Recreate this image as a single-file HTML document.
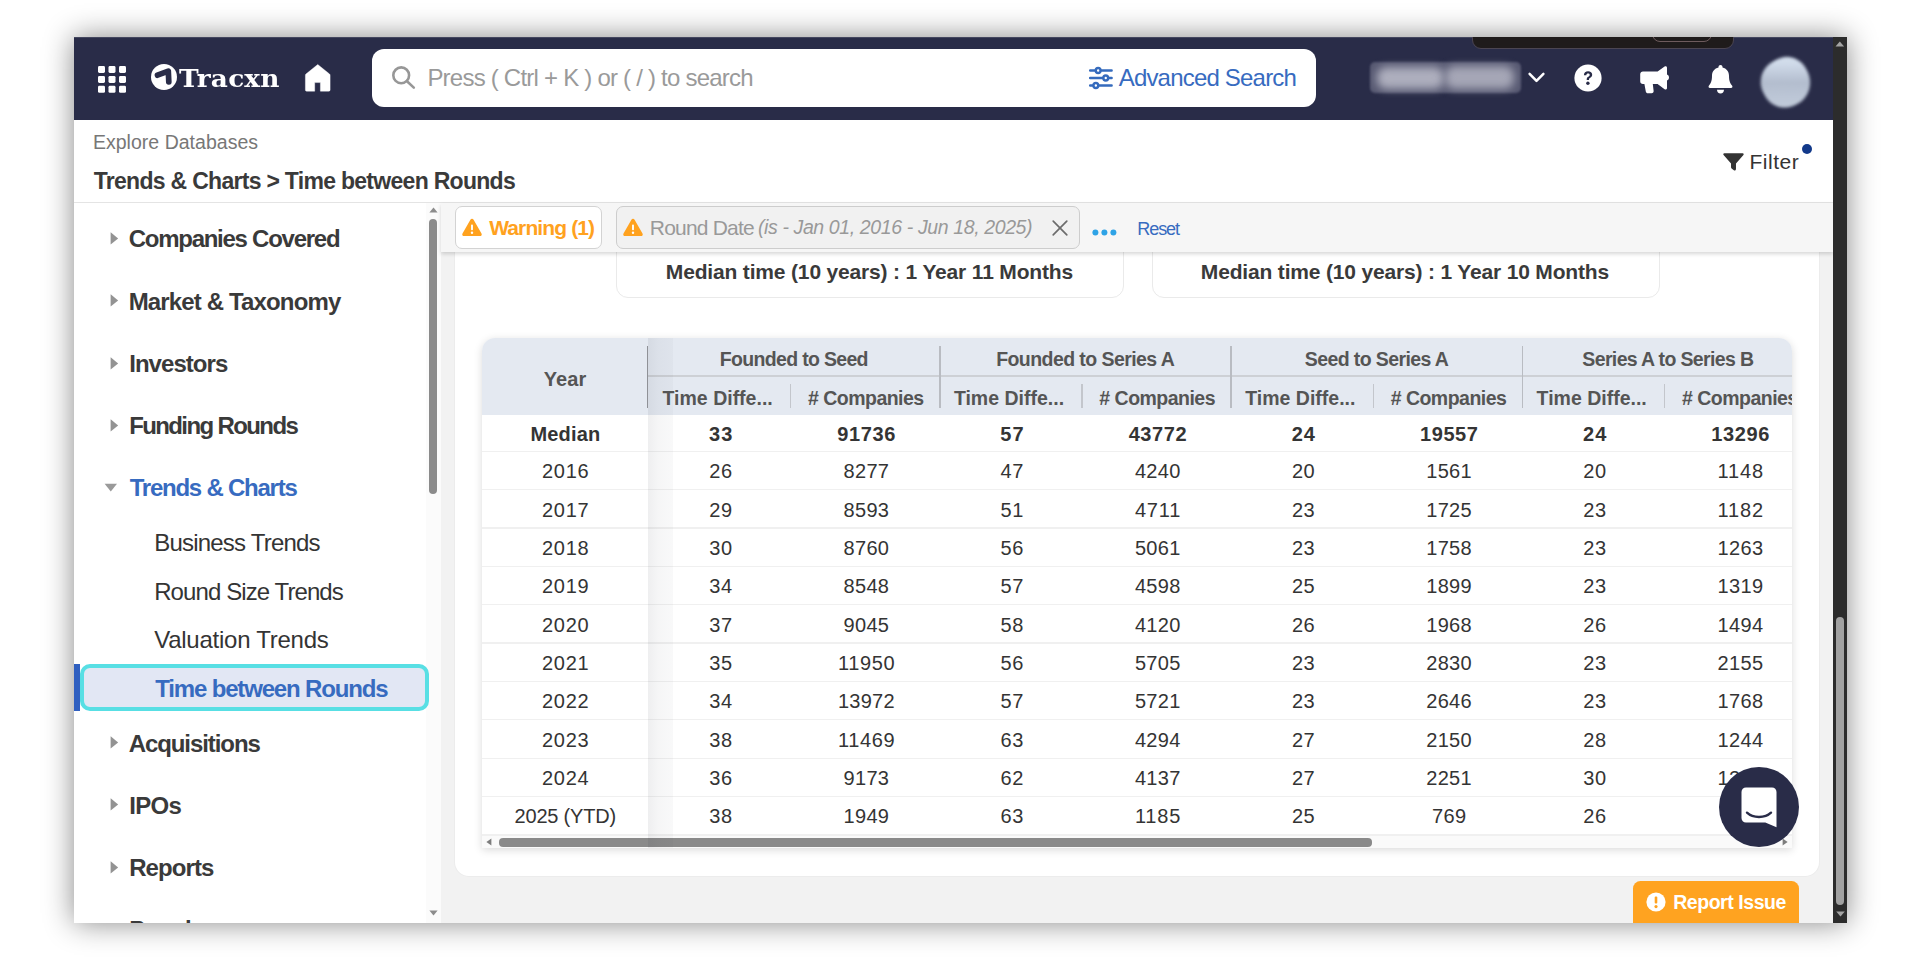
<!DOCTYPE html>
<html lang="en"><head><meta charset="utf-8"><title>Tracxn - Time between Rounds</title>
<style>
html,body{margin:0;padding:0;background:#fff;}
body{width:1920px;height:960px;overflow:hidden;position:relative;font-family:"Liberation Sans",sans-serif;}
.win{position:absolute;left:74px;top:37px;width:1773px;height:886px;overflow:hidden;background:#f3f3f3;}
.shadow{position:absolute;left:74px;top:37px;width:1773px;height:886px;box-shadow:0 0 28px rgba(0,0,0,.47);}
.o{position:absolute;left:-74px;top:-37px;width:1920px;height:960px;}
.a{position:absolute;}
.t{position:absolute;white-space:nowrap;line-height:1;z-index:2;}
svg{position:absolute;overflow:visible;}
</style></head><body>
<div class="shadow"></div>
<div class="win"><div class="o">

<!-- top bar -->
<div class="a" style="left:74px;top:37px;width:1759px;height:83px;background:#292c48;"></div>
<div class="a" style="left:74px;top:37px;width:1759px;height:1px;background:rgba(255,255,255,.13);"></div>
<!-- black pill overlay at top -->
<div class="a" style="left:1472.3px;top:20px;width:261.4px;height:29px;box-sizing:border-box;background:#1f1b1b;border:1px solid #4b4552;border-radius:9px;"></div>
<div class="a" style="left:1652.3px;top:20px;width:57.6px;height:20.4px;border:1.4px solid #6e5b5d;border-radius:8px;"></div>
<!-- app grid icon -->
<svg style="left:98px;top:65.8px" width="28" height="27" viewBox="0 0 28 27" fill="#fff">
<rect x="0" y="0" width="7" height="7" rx="1.4"/><rect x="10.5" y="0" width="7" height="7" rx="1.4"/><rect x="21" y="0" width="7" height="7" rx="1.4"/>
<rect x="0" y="9.9" width="7" height="7" rx="1.4"/><rect x="10.5" y="9.9" width="7" height="7" rx="1.4"/><rect x="21" y="9.9" width="7" height="7" rx="1.4"/>
<rect x="0" y="19.8" width="7" height="7" rx="1.4"/><rect x="10.5" y="19.8" width="7" height="7" rx="1.4"/><rect x="21" y="19.8" width="7" height="7" rx="1.4"/>
</svg>
<!-- logo mark -->
<svg style="left:151px;top:64.1px" width="26" height="26" viewBox="0 0 26 26">
<circle cx="13" cy="13" r="13" fill="#fff"/>
<path d="M6.5 11.2 L17.3 7.1 L17.8 17.9" fill="none" stroke="#292c48" stroke-width="5.7" stroke-linecap="round" stroke-linejoin="round"/>
</svg>
<!-- home icon -->
<svg style="left:304.8px;top:63.8px" width="25.5" height="27.4" viewBox="0 0 26 27.4" preserveAspectRatio="none">
<path d="M13 0.5 L25 10 Q25.6 10.5 25.6 11.3 V25.9 Q25.6 27.2 24.2 27.2 H15.7 V18.6 H9.9 V27.2 H1.8 Q0.4 27.2 0.4 25.9 V11.3 Q0.4 10.5 1 10 Z" fill="#fff" stroke="#fff" stroke-width="0.4" stroke-linejoin="round"/>
</svg>
<!-- search box -->
<div class="a" style="left:371.5px;top:49.2px;width:944.5px;height:57.7px;background:#fff;border-radius:12px;"></div>
<svg style="left:391.5px;top:66.2px" width="23" height="23" viewBox="0 0 23 23" fill="none" stroke="#979797" stroke-width="2.6" stroke-linecap="round">
<circle cx="9.2" cy="9.3" r="7.9"/><path d="M15 15.2 L21.8 21.6"/>
</svg>
<!-- sliders icon -->
<svg style="left:1088.8px;top:67px" width="23.8" height="22" viewBox="0 0 25 22" preserveAspectRatio="none" fill="none" stroke="#356bbd" stroke-width="2.5" stroke-linecap="round">
<path d="M1.2 3.6 H23.8 M1.2 11 H23.8 M1.2 18.4 H23.8"/>
<circle cx="9.6" cy="3.6" r="2.5" fill="#fff"/><circle cx="17.6" cy="11" r="2.5" fill="#fff"/><circle cx="7.2" cy="18.4" r="2.5" fill="#fff"/>
</svg>
<!-- blurred account name -->
<div class="a" style="left:1369.5px;top:62px;width:151.5px;height:31px;border-radius:5px;background:#575972;filter:blur(1.3px);"></div>
<div class="a" style="left:1377px;top:66.5px;width:67px;height:22px;border-radius:9px;background:#adaebd;filter:blur(4.2px);"></div>
<div class="a" style="left:1445px;top:65.5px;width:69px;height:23px;border-radius:9px;background:#a5a6b6;filter:blur(4.2px);"></div>
<!-- chevron -->
<svg style="left:1527.6px;top:71.8px" width="17" height="11" viewBox="0 0 17 11" fill="none" stroke="#fff" stroke-width="2.5" stroke-linecap="round" stroke-linejoin="round"><path d="M1.6 1.8 L8.5 8.8 L15.4 1.8"/></svg>
<!-- help -->
<svg style="left:1573.9px;top:63.8px" width="28" height="28" viewBox="0 0 28 28">
<circle cx="14" cy="14" r="13.6" fill="#fff"/>
<path d="M9.9 11.2 C9.9 8.6 11.7 7.3 14.1 7.3 C16.5 7.3 18.2 8.6 18.2 10.7 C18.2 12.6 17 13.3 15.9 14 C15.2 14.5 15 14.9 15 15.9 H12.7 C12.7 14.2 13 13.5 14.2 12.7 C15.1 12.1 15.7 11.7 15.7 10.9 C15.7 10 15 9.5 14.1 9.5 C13 9.5 12.4 10.1 12.3 11.2 Z" fill="#292c48"/>
<circle cx="13.9" cy="19.2" r="1.7" fill="#292c48"/>
</svg>
<!-- megaphone -->
<svg style="left:1639.6px;top:65.6px" width="30" height="28" viewBox="0 0 30 28" fill="#fff">
<path d="M24.6 0.6 C25.8 -0.2 27 0.5 27 1.8 V8.6 C28.2 9 29 10.1 29 11.6 C29 13.1 28.2 14.2 27 14.6 V22 C27 23.3 25.8 24 24.6 23.2 L17.6 18 H12.8 L13.6 24.8 C13.8 26.2 13 27.2 11.6 27.2 H8 C6.8 27.2 6 26.5 5.8 25.4 L4.4 18 H3 C1.3 18 0.2 16.9 0.2 15.2 V8.2 C0.2 6.5 1.3 5.4 3 5.4 H17.6 Z"/>
</svg>
<!-- bell -->
<svg style="left:1707.8px;top:64.6px" width="25" height="29" viewBox="0 0 25 29" fill="#fff">
<path d="M12.5 0 C13.7 0 14.5 0.8 14.5 1.9 V2.6 C18.5 3.5 21 6.8 21 10.8 C21 16.4 22.4 18.8 24 20.4 C24.9 21.3 24.4 23 23 23 H2 C0.6 23 0.1 21.3 1 20.4 C2.6 18.8 4 16.4 4 10.8 C4 6.8 6.5 3.5 10.5 2.6 V1.9 C10.5 0.8 11.3 0 12.5 0 Z"/>
<path d="M9 24.8 H16 C16 27 14.6 28.6 12.5 28.6 C10.4 28.6 9 27 9 24.8 Z"/>
</svg>
<!-- avatar (blurred) -->
<div class="a" style="left:1760.5px;top:57.5px;width:49px;height:48.5px;border-radius:48% 44% 50% 46%;transform:rotate(-28deg);background:linear-gradient(208deg,#d9e4f1 0%,#cfdae9 22%,#b3bdce 50%,#bcc6d6 72%,#c6cfdc 100%);filter:blur(1.7px);"></div>
<!-- sub header -->
<div class="a" style="left:74px;top:120px;width:1759px;height:82px;background:#fff;border-bottom:1px solid #e4e4e4;"></div>
<svg style="left:1722.5px;top:152.5px" width="21" height="18" viewBox="0 0 22 18" preserveAspectRatio="none"><path d="M1.4 0.3 H20.6 C21.6 0.3 22 1.3 21.4 2 L13.6 10.6 V16 C13.6 17.3 12.4 17.9 11.4 17.2 L9 15.4 C8.5 15 8.4 14.6 8.4 14 V10.6 L0.6 2 C0 1.3 0.4 0.3 1.4 0.3 Z" fill="#333"/></svg>
<div class="a" style="left:1801.5px;top:143.6px;width:10.4px;height:10.4px;border-radius:50%;background:#12398a;"></div>
<!-- sidebar -->
<div class="a" style="left:74px;top:203px;width:352px;height:720px;background:#fff;"></div>
<div class="a" style="left:426px;top:203px;width:14.5px;height:720px;background:#fbfbfb;"></div>
<svg style="left:428.8px;top:206.9px" width="9" height="6" viewBox="0 0 9 6"><path d="M4.5 0.6 L8.6 5.4 H0.4 Z" fill="#8c8c8c"/></svg>
<div class="a" style="left:429px;top:218.6px;width:8.2px;height:275.6px;border-radius:4px;background:#8b8b8b;"></div>
<svg style="left:429px;top:909.5px" width="9" height="6" viewBox="0 0 9 6"><path d="M4.5 5.4 L8.6 0.6 H0.4 Z" fill="#8c8c8c"/></svg>
<!-- selected item -->
<div class="a" style="left:74px;top:664.3px;width:6px;height:47px;background:#2f5fc0;"></div>
<div class="a" style="left:80px;top:664.3px;width:348.5px;height:47px;box-sizing:border-box;border:4.6px solid #58dfe4;border-radius:10px;background:#e2e7f4;"></div>
<svg style="left:109.8px;top:231.9px" width="8.8" height="12.8" viewBox="0 0 9 14"><path d="M0.4 0.4 L8.6 7 L0.4 13.6 Z" fill="#939393"/></svg>
<svg style="left:109.8px;top:294.2px" width="8.8" height="12.8" viewBox="0 0 9 14"><path d="M0.4 0.4 L8.6 7 L0.4 13.6 Z" fill="#939393"/></svg>
<svg style="left:109.8px;top:356.7px" width="8.8" height="12.8" viewBox="0 0 9 14"><path d="M0.4 0.4 L8.6 7 L0.4 13.6 Z" fill="#939393"/></svg>
<svg style="left:109.8px;top:418.8px" width="8.8" height="12.8" viewBox="0 0 9 14"><path d="M0.4 0.4 L8.6 7 L0.4 13.6 Z" fill="#939393"/></svg>
<svg style="left:109.8px;top:736.1px" width="8.8" height="12.8" viewBox="0 0 9 14"><path d="M0.4 0.4 L8.6 7 L0.4 13.6 Z" fill="#939393"/></svg>
<svg style="left:109.8px;top:798.4px" width="8.8" height="12.8" viewBox="0 0 9 14"><path d="M0.4 0.4 L8.6 7 L0.4 13.6 Z" fill="#939393"/></svg>
<svg style="left:109.8px;top:860.7px" width="8.8" height="12.8" viewBox="0 0 9 14"><path d="M0.4 0.4 L8.6 7 L0.4 13.6 Z" fill="#939393"/></svg>
<svg style="left:109.8px;top:922.9px" width="8.8" height="12.8" viewBox="0 0 9 14"><path d="M0.4 0.4 L8.6 7 L0.4 13.6 Z" fill="#939393"/></svg>
<svg style="left:103.7px;top:483.2px" width="14" height="9" viewBox="0 0 14 9"><path d="M0.6 0.8 H13 L6.8 8.4 Z" fill="#9a9a9a"/></svg>
<!-- main -->
<div class="a" style="left:440.5px;top:203px;width:1392.5px;height:720px;background:#f2f2f2;"></div>
<!-- white card -->
<div class="a" style="left:455px;top:230px;width:1364.3px;height:645.7px;background:#fff;border-radius:0 0 14px 14px;box-shadow:0 0 0 1px #ececec;"></div>
<!-- median cards -->
<div class="a" style="left:616px;top:230px;width:507.5px;height:67.8px;box-sizing:border-box;border:1.3px solid #eaeaea;border-radius:0 0 12px 12px;background:#fff;"></div>
<div class="a" style="left:1151.5px;top:230px;width:508px;height:67.8px;box-sizing:border-box;border:1.3px solid #eaeaea;border-radius:0 0 12px 12px;background:#fff;"></div>
<!-- filter bar -->
<div class="a" style="left:441.3px;top:203px;width:1391.7px;height:49px;background:#f6f6f6;box-shadow:0 2px 4px rgba(0,0,0,.16);"></div>
<div class="a" style="left:455px;top:206px;width:146.5px;height:42.7px;box-sizing:border-box;border:1.3px solid #d3d3d3;border-radius:7px;background:#fff;"></div>
<div class="a" style="left:616px;top:206px;width:464px;height:42.7px;box-sizing:border-box;border:1.3px solid #cdcdcd;border-radius:7px;background:#f1f1f1;"></div>
<svg style="left:462.3px;top:218px" width="20" height="18" viewBox="0 0 20 18"><path d="M10 0.8 C10.7 0.8 11.2 1.1 11.6 1.8 L19.5 15.4 C20.2 16.7 19.5 18 18 18 H2 C0.5 18 -0.2 16.7 0.5 15.4 L8.4 1.8 C8.8 1.1 9.3 0.8 10 0.8 Z" fill="#ffa21f"/><rect x="9.05" y="6.4" width="1.9" height="5.8" rx="0.8" fill="#fff"/><circle cx="10" cy="14.8" r="1.2" fill="#fff"/></svg>
<svg style="left:623.3px;top:218px" width="20" height="18" viewBox="0 0 20 18"><path d="M10 0.8 C10.7 0.8 11.2 1.1 11.6 1.8 L19.5 15.4 C20.2 16.7 19.5 18 18 18 H2 C0.5 18 -0.2 16.7 0.5 15.4 L8.4 1.8 C8.8 1.1 9.3 0.8 10 0.8 Z" fill="#ffa21f"/><rect x="9.05" y="6.4" width="1.9" height="5.8" rx="0.8" fill="#fff"/><circle cx="10" cy="14.8" r="1.2" fill="#fff"/></svg>
<svg style="left:1051.5px;top:219.5px" width="16" height="16" viewBox="0 0 16 16" fill="none" stroke="#6c6c6c" stroke-width="1.7" stroke-linecap="round"><path d="M1.2 1.2 L14.8 14.8 M14.8 1.2 L1.2 14.8"/></svg>
<svg style="left:1091.5px;top:229px" width="25" height="7" viewBox="0 0 25 7" fill="#2ea3e6"><circle cx="3.4" cy="3.5" r="3"/><circle cx="12.4" cy="3.5" r="3"/><circle cx="21.4" cy="3.5" r="3"/></svg>
<!-- table -->
<div class="a" style="left:481.5px;top:337.6px;width:1310.8px;height:510.9px;border-radius:13px 13px 0 0;overflow:hidden;background:#fff;box-shadow:0 2px 8px rgba(0,0,0,.15);">
<div class="a" style="left:0;top:0;width:100%;height:77.8px;background:#e4e9f1;"></div>
<div class="a" style="left:0;top:113.1px;width:100%;height:1.2px;background:#f0f0f0;"></div>
<div class="a" style="left:0;top:151.5px;width:100%;height:1.2px;background:#f0f0f0;"></div>
<div class="a" style="left:0;top:189.8px;width:100%;height:1.2px;background:#f0f0f0;"></div>
<div class="a" style="left:0;top:228.2px;width:100%;height:1.2px;background:#f0f0f0;"></div>
<div class="a" style="left:0;top:266.6px;width:100%;height:1.2px;background:#f0f0f0;"></div>
<div class="a" style="left:0;top:304.9px;width:100%;height:1.2px;background:#f0f0f0;"></div>
<div class="a" style="left:0;top:343.3px;width:100%;height:1.2px;background:#f0f0f0;"></div>
<div class="a" style="left:0;top:381.7px;width:100%;height:1.2px;background:#f0f0f0;"></div>
<div class="a" style="left:0;top:420.1px;width:100%;height:1.2px;background:#f0f0f0;"></div>
<div class="a" style="left:0;top:458.4px;width:100%;height:1.2px;background:#f0f0f0;"></div>
<div class="a" style="left:0;top:496.8px;width:100%;height:1.2px;background:#f0f0f0;"></div>
<div class="a" style="left:166.0px;top:37.9px;right:0;height:1.4px;background:#cdd0d5;"></div>
<div class="a" style="left:165.2px;top:8.6px;width:1.6px;height:62px;background:#8f9197;"></div>
<div class="a" style="left:457.5px;top:8.6px;width:1.6px;height:62px;background:#b9bcc2;"></div>
<div class="a" style="left:748.9px;top:8.6px;width:1.6px;height:62px;background:#b9bcc2;"></div>
<div class="a" style="left:1040.2px;top:8.6px;width:1.6px;height:62px;background:#b9bcc2;"></div>
<div class="a" style="left:308.4px;top:46.4px;width:1.4px;height:24.5px;background:#c3c6cc;"></div>
<div class="a" style="left:599.7px;top:46.4px;width:1.4px;height:24.5px;background:#c3c6cc;"></div>
<div class="a" style="left:891.0px;top:46.4px;width:1.4px;height:24.5px;background:#c3c6cc;"></div>
<div class="a" style="left:1182.4px;top:46.4px;width:1.4px;height:24.5px;background:#c3c6cc;"></div>
<div class="a" style="left:0;top:498.0px;width:100%;height:12.9px;background:#fafafa;"></div>
<div class="a" style="left:17.8px;top:500.8px;width:873.2px;height:8.2px;border-radius:4.1px;background:#8a8a8a;"></div>
<svg style="left:4.8px;top:500.9px" width="6" height="8" viewBox="0 0 6 8"><path d="M0.4 4 L5.4 0.4 V7.6 Z" fill="#7d7d7d"/></svg>
<svg style="left:1300.0px;top:500.9px" width="6" height="8" viewBox="0 0 6 8"><path d="M5.6 4 L0.6 0.4 V7.6 Z" fill="#7d7d7d"/></svg>
<div class="a" style="left:166.0px;top:0;width:25.3px;height:100%;background:linear-gradient(90deg,rgba(30,35,50,.075),rgba(30,35,50,.045) 40%,rgba(30,35,50,.028) 100%);"></div>
</div>
<!-- report issue -->
<div class="a" style="left:1633px;top:881px;width:165.9px;height:60px;border-radius:7.5px;background:#ffa320;"></div>
<svg style="left:1645.8px;top:891.6px" width="20" height="20" viewBox="0 0 20 20"><circle cx="10" cy="10" r="9.6" fill="#fff"/><rect x="8.7" y="4.4" width="2.6" height="7.2" rx="1" fill="#ffa21f"/><circle cx="10" cy="14.6" r="1.6" fill="#ffa21f"/></svg>

<div class="t" style="left:178.95px;top:64.65px;font-size:26.4px;color:#fff;font-weight:700;font-family:'DejaVu Serif',serif;letter-spacing:0.157px;transform:scaleY(0.915);transform-origin:0 22.35px;">Tracxn</div>
<div class="t" style="left:427.38px;top:66.18px;font-size:24px;color:#9a9a9a;letter-spacing:-0.773px;">Press ( Ctrl + K ) or ( / ) to search</div>
<div class="t" style="left:1118.68px;top:66.18px;font-size:24px;color:#376bc0;letter-spacing:-0.802px;">Advanced Search</div>
<div class="t" style="left:92.93px;top:132.89px;font-size:19.5px;color:#777;letter-spacing:0.024px;">Explore Databases</div>
<div class="t" style="left:93.73px;top:169.53px;font-size:23px;color:#3a3a3a;font-weight:700;letter-spacing:-0.709px;">Trends &amp; Charts &gt; Time between Rounds</div>
<div class="t" style="left:1749.55px;top:150.92px;font-size:21px;color:#343434;letter-spacing:0.488px;">Filter</div>
<div class="t" style="left:128.68px;top:227.48px;font-size:24px;color:#3a3a3a;font-weight:700;letter-spacing:-1.259px;">Companies Covered</div>
<div class="t" style="left:128.68px;top:289.78px;font-size:24px;color:#3a3a3a;font-weight:700;letter-spacing:-0.853px;">Market &amp; Taxonomy</div>
<div class="t" style="left:129.18px;top:352.28px;font-size:24px;color:#3a3a3a;font-weight:700;letter-spacing:-0.947px;">Investors</div>
<div class="t" style="left:129.18px;top:414.38px;font-size:24px;color:#3a3a3a;font-weight:700;letter-spacing:-1.614px;">Funding Rounds</div>
<div class="t" style="left:128.68px;top:731.68px;font-size:24px;color:#3a3a3a;font-weight:700;letter-spacing:-1.080px;">Acquisitions</div>
<div class="t" style="left:129.18px;top:793.98px;font-size:24px;color:#3a3a3a;font-weight:700;letter-spacing:-0.688px;">IPOs</div>
<div class="t" style="left:129.18px;top:856.28px;font-size:24px;color:#3a3a3a;font-weight:700;letter-spacing:-0.925px;">Reports</div>
<div class="t" style="left:129.18px;top:918.48px;font-size:24px;color:#3a3a3a;font-weight:700;letter-spacing:-0.713px;">People</div>
<div class="t" style="left:129.68px;top:475.88px;font-size:24px;color:#376bc0;font-weight:700;letter-spacing:-1.232px;">Trends &amp; Charts</div>
<div class="t" style="left:154.18px;top:531.18px;font-size:24px;color:#343434;letter-spacing:-0.784px;">Business Trends</div>
<div class="t" style="left:154.18px;top:579.88px;font-size:24px;color:#343434;letter-spacing:-0.905px;">Round Size Trends</div>
<div class="t" style="left:154.18px;top:628.28px;font-size:24px;color:#343434;letter-spacing:-0.247px;">Valuation Trends</div>
<div class="t" style="left:155.18px;top:676.68px;font-size:24px;color:#376bc0;font-weight:700;letter-spacing:-1.157px;">Time between Rounds</div>
<div class="t" style="left:489.15px;top:216.72px;font-size:21px;color:#ffa21f;font-weight:700;letter-spacing:-0.881px;">Warning (1)</div>
<div class="t" style="left:649.85px;top:216.72px;font-size:21px;color:#999;letter-spacing:-0.808px;">Round Date</div>
<div class="t" style="left:757.93px;top:217.99px;font-size:19.5px;color:#999;font-style:italic;letter-spacing:-0.382px;">(is - Jan 01, 2016 - Jun 18, 2025)</div>
<div class="t" style="left:1137.31px;top:220.26px;font-size:18px;color:#376bc0;letter-spacing:-1.088px;">Reset</div>
<div class="t" style="left:665.85px;top:261.42px;font-size:21px;color:#3a3a3a;font-weight:700;letter-spacing:-0.166px;">Median time (10 years) : 1 Year 11 Months</div>
<div class="t" style="left:1200.85px;top:261.42px;font-size:21px;color:#3a3a3a;font-weight:700;letter-spacing:-0.170px;">Median time (10 years) : 1 Year 10 Months</div>
<div class="t" style="left:1673.13px;top:893.49px;font-size:19.5px;color:#fff;font-weight:700;letter-spacing:-0.444px;">Report Issue</div>
<div class="t" style="left:543.65px;top:368.77px;font-size:20px;color:#555;font-weight:700;letter-spacing:0.145px;">Year</div>
<div class="t" style="left:719.85px;top:350.19px;font-size:19.5px;color:#555;font-weight:700;letter-spacing:-0.680px;">Founded to Seed</div>
<div class="t" style="left:996.19px;top:350.19px;font-size:19.5px;color:#555;font-weight:700;letter-spacing:-0.569px;">Founded to Series A</div>
<div class="t" style="left:1304.78px;top:350.19px;font-size:19.5px;color:#555;font-weight:700;letter-spacing:-0.603px;">Seed to Series A</div>
<div class="t" style="left:1582.37px;top:350.19px;font-size:19.5px;color:#555;font-weight:700;letter-spacing:-0.645px;">Series A to Series B</div>
<div class="t" style="left:662.56px;top:388.69px;font-size:19.5px;color:#555;font-weight:700;">Time Diffe...</div>
<div class="t" style="left:808.03px;top:388.69px;font-size:19.5px;color:#555;font-weight:700;letter-spacing:-0.523px;"># Companies</div>
<div class="t" style="left:953.90px;top:388.69px;font-size:19.5px;color:#555;font-weight:700;">Time Diffe...</div>
<div class="t" style="left:1099.37px;top:388.69px;font-size:19.5px;color:#555;font-weight:700;letter-spacing:-0.523px;"># Companies</div>
<div class="t" style="left:1245.24px;top:388.69px;font-size:19.5px;color:#555;font-weight:700;">Time Diffe...</div>
<div class="t" style="left:1390.71px;top:388.69px;font-size:19.5px;color:#555;font-weight:700;letter-spacing:-0.523px;"># Companies</div>
<div class="t" style="left:1536.58px;top:388.69px;font-size:19.5px;color:#555;font-weight:700;">Time Diffe...</div>
<div class="t" style="left:530.45px;top:423.67px;font-size:20px;color:#343434;font-weight:700;letter-spacing:0.159px;">Median</div>
<div class="t" style="left:708.99px;top:423.67px;font-size:20px;color:#343434;font-weight:700;letter-spacing:1.050px;">33</div>
<div class="t" style="left:837.33px;top:423.67px;font-size:20px;color:#343434;font-weight:700;letter-spacing:0.581px;">91736</div>
<div class="t" style="left:1000.32px;top:423.67px;font-size:20px;color:#343434;font-weight:700;letter-spacing:1.050px;">57</div>
<div class="t" style="left:1128.67px;top:423.67px;font-size:20px;color:#343434;font-weight:700;letter-spacing:0.581px;">43772</div>
<div class="t" style="left:1291.66px;top:423.67px;font-size:20px;color:#343434;font-weight:700;letter-spacing:1.050px;">24</div>
<div class="t" style="left:1420.01px;top:423.67px;font-size:20px;color:#343434;font-weight:700;letter-spacing:0.581px;">19557</div>
<div class="t" style="left:1583.00px;top:423.67px;font-size:20px;color:#343434;font-weight:700;letter-spacing:1.050px;">24</div>
<div class="t" style="left:1711.35px;top:423.67px;font-size:20px;color:#343434;font-weight:700;letter-spacing:0.581px;">13296</div>
<div class="t" style="left:542.05px;top:461.16px;font-size:20px;color:#343434;letter-spacing:0.667px;">2016</div>
<div class="t" style="left:709.24px;top:461.16px;font-size:20px;color:#343434;letter-spacing:0.550px;">26</div>
<div class="t" style="left:843.60px;top:461.16px;font-size:20px;color:#343434;letter-spacing:0.300px;">8277</div>
<div class="t" style="left:1000.57px;top:461.16px;font-size:20px;color:#343434;letter-spacing:0.550px;">47</div>
<div class="t" style="left:1134.94px;top:461.16px;font-size:20px;color:#343434;letter-spacing:0.300px;">4240</div>
<div class="t" style="left:1291.91px;top:461.16px;font-size:20px;color:#343434;letter-spacing:0.550px;">20</div>
<div class="t" style="left:1426.28px;top:461.16px;font-size:20px;color:#343434;letter-spacing:0.300px;">1561</div>
<div class="t" style="left:1583.25px;top:461.16px;font-size:20px;color:#343434;letter-spacing:0.550px;">20</div>
<div class="t" style="left:1717.62px;top:461.16px;font-size:20px;color:#343434;letter-spacing:0.795px;">1148</div>
<div class="t" style="left:542.05px;top:499.53px;font-size:20px;color:#343434;letter-spacing:0.667px;">2017</div>
<div class="t" style="left:709.24px;top:499.53px;font-size:20px;color:#343434;letter-spacing:0.550px;">29</div>
<div class="t" style="left:843.60px;top:499.53px;font-size:20px;color:#343434;letter-spacing:0.300px;">8593</div>
<div class="t" style="left:1000.57px;top:499.53px;font-size:20px;color:#343434;letter-spacing:0.550px;">51</div>
<div class="t" style="left:1134.94px;top:499.53px;font-size:20px;color:#343434;letter-spacing:0.795px;">4711</div>
<div class="t" style="left:1291.91px;top:499.53px;font-size:20px;color:#343434;letter-spacing:0.550px;">23</div>
<div class="t" style="left:1426.28px;top:499.53px;font-size:20px;color:#343434;letter-spacing:0.300px;">1725</div>
<div class="t" style="left:1583.25px;top:499.53px;font-size:20px;color:#343434;letter-spacing:0.550px;">23</div>
<div class="t" style="left:1717.62px;top:499.53px;font-size:20px;color:#343434;letter-spacing:0.795px;">1182</div>
<div class="t" style="left:542.05px;top:537.90px;font-size:20px;color:#343434;letter-spacing:0.667px;">2018</div>
<div class="t" style="left:709.24px;top:537.90px;font-size:20px;color:#343434;letter-spacing:0.550px;">30</div>
<div class="t" style="left:843.60px;top:537.90px;font-size:20px;color:#343434;letter-spacing:0.300px;">8760</div>
<div class="t" style="left:1000.57px;top:537.90px;font-size:20px;color:#343434;letter-spacing:0.550px;">56</div>
<div class="t" style="left:1134.94px;top:537.90px;font-size:20px;color:#343434;letter-spacing:0.300px;">5061</div>
<div class="t" style="left:1291.91px;top:537.90px;font-size:20px;color:#343434;letter-spacing:0.550px;">23</div>
<div class="t" style="left:1426.28px;top:537.90px;font-size:20px;color:#343434;letter-spacing:0.300px;">1758</div>
<div class="t" style="left:1583.25px;top:537.90px;font-size:20px;color:#343434;letter-spacing:0.550px;">23</div>
<div class="t" style="left:1717.62px;top:537.90px;font-size:20px;color:#343434;letter-spacing:0.300px;">1263</div>
<div class="t" style="left:542.05px;top:576.27px;font-size:20px;color:#343434;letter-spacing:0.667px;">2019</div>
<div class="t" style="left:709.24px;top:576.27px;font-size:20px;color:#343434;letter-spacing:0.550px;">34</div>
<div class="t" style="left:843.60px;top:576.27px;font-size:20px;color:#343434;letter-spacing:0.300px;">8548</div>
<div class="t" style="left:1000.57px;top:576.27px;font-size:20px;color:#343434;letter-spacing:0.550px;">57</div>
<div class="t" style="left:1134.94px;top:576.27px;font-size:20px;color:#343434;letter-spacing:0.300px;">4598</div>
<div class="t" style="left:1291.91px;top:576.27px;font-size:20px;color:#343434;letter-spacing:0.550px;">25</div>
<div class="t" style="left:1426.28px;top:576.27px;font-size:20px;color:#343434;letter-spacing:0.300px;">1899</div>
<div class="t" style="left:1583.25px;top:576.27px;font-size:20px;color:#343434;letter-spacing:0.550px;">23</div>
<div class="t" style="left:1717.62px;top:576.27px;font-size:20px;color:#343434;letter-spacing:0.300px;">1319</div>
<div class="t" style="left:542.05px;top:614.64px;font-size:20px;color:#343434;letter-spacing:0.667px;">2020</div>
<div class="t" style="left:709.24px;top:614.64px;font-size:20px;color:#343434;letter-spacing:0.550px;">37</div>
<div class="t" style="left:843.60px;top:614.64px;font-size:20px;color:#343434;letter-spacing:0.300px;">9045</div>
<div class="t" style="left:1000.57px;top:614.64px;font-size:20px;color:#343434;letter-spacing:0.550px;">58</div>
<div class="t" style="left:1134.94px;top:614.64px;font-size:20px;color:#343434;letter-spacing:0.300px;">4120</div>
<div class="t" style="left:1291.91px;top:614.64px;font-size:20px;color:#343434;letter-spacing:0.550px;">26</div>
<div class="t" style="left:1426.28px;top:614.64px;font-size:20px;color:#343434;letter-spacing:0.300px;">1968</div>
<div class="t" style="left:1583.25px;top:614.64px;font-size:20px;color:#343434;letter-spacing:0.550px;">26</div>
<div class="t" style="left:1717.62px;top:614.64px;font-size:20px;color:#343434;letter-spacing:0.300px;">1494</div>
<div class="t" style="left:542.05px;top:653.01px;font-size:20px;color:#343434;letter-spacing:0.667px;">2021</div>
<div class="t" style="left:709.24px;top:653.01px;font-size:20px;color:#343434;letter-spacing:0.550px;">35</div>
<div class="t" style="left:837.95px;top:653.01px;font-size:20px;color:#343434;letter-spacing:0.640px;">11950</div>
<div class="t" style="left:1000.57px;top:653.01px;font-size:20px;color:#343434;letter-spacing:0.550px;">56</div>
<div class="t" style="left:1134.94px;top:653.01px;font-size:20px;color:#343434;letter-spacing:0.300px;">5705</div>
<div class="t" style="left:1291.91px;top:653.01px;font-size:20px;color:#343434;letter-spacing:0.550px;">23</div>
<div class="t" style="left:1426.28px;top:653.01px;font-size:20px;color:#343434;letter-spacing:0.300px;">2830</div>
<div class="t" style="left:1583.25px;top:653.01px;font-size:20px;color:#343434;letter-spacing:0.550px;">23</div>
<div class="t" style="left:1717.62px;top:653.01px;font-size:20px;color:#343434;letter-spacing:0.300px;">2155</div>
<div class="t" style="left:542.05px;top:691.38px;font-size:20px;color:#343434;letter-spacing:0.667px;">2022</div>
<div class="t" style="left:709.24px;top:691.38px;font-size:20px;color:#343434;letter-spacing:0.550px;">34</div>
<div class="t" style="left:837.95px;top:691.38px;font-size:20px;color:#343434;letter-spacing:0.269px;">13972</div>
<div class="t" style="left:1000.57px;top:691.38px;font-size:20px;color:#343434;letter-spacing:0.550px;">57</div>
<div class="t" style="left:1134.94px;top:691.38px;font-size:20px;color:#343434;letter-spacing:0.300px;">5721</div>
<div class="t" style="left:1291.91px;top:691.38px;font-size:20px;color:#343434;letter-spacing:0.550px;">23</div>
<div class="t" style="left:1426.28px;top:691.38px;font-size:20px;color:#343434;letter-spacing:0.300px;">2646</div>
<div class="t" style="left:1583.25px;top:691.38px;font-size:20px;color:#343434;letter-spacing:0.550px;">23</div>
<div class="t" style="left:1717.62px;top:691.38px;font-size:20px;color:#343434;letter-spacing:0.300px;">1768</div>
<div class="t" style="left:542.05px;top:729.75px;font-size:20px;color:#343434;letter-spacing:0.667px;">2023</div>
<div class="t" style="left:709.24px;top:729.75px;font-size:20px;color:#343434;letter-spacing:0.550px;">38</div>
<div class="t" style="left:837.95px;top:729.75px;font-size:20px;color:#343434;letter-spacing:0.640px;">11469</div>
<div class="t" style="left:1000.57px;top:729.75px;font-size:20px;color:#343434;letter-spacing:0.550px;">63</div>
<div class="t" style="left:1134.94px;top:729.75px;font-size:20px;color:#343434;letter-spacing:0.300px;">4294</div>
<div class="t" style="left:1291.91px;top:729.75px;font-size:20px;color:#343434;letter-spacing:0.550px;">27</div>
<div class="t" style="left:1426.28px;top:729.75px;font-size:20px;color:#343434;letter-spacing:0.300px;">2150</div>
<div class="t" style="left:1583.25px;top:729.75px;font-size:20px;color:#343434;letter-spacing:0.550px;">28</div>
<div class="t" style="left:1717.62px;top:729.75px;font-size:20px;color:#343434;letter-spacing:0.300px;">1244</div>
<div class="t" style="left:542.05px;top:768.12px;font-size:20px;color:#343434;letter-spacing:0.667px;">2024</div>
<div class="t" style="left:709.24px;top:768.12px;font-size:20px;color:#343434;letter-spacing:0.550px;">36</div>
<div class="t" style="left:843.60px;top:768.12px;font-size:20px;color:#343434;letter-spacing:0.300px;">9173</div>
<div class="t" style="left:1000.57px;top:768.12px;font-size:20px;color:#343434;letter-spacing:0.550px;">62</div>
<div class="t" style="left:1134.94px;top:768.12px;font-size:20px;color:#343434;letter-spacing:0.300px;">4137</div>
<div class="t" style="left:1291.91px;top:768.12px;font-size:20px;color:#343434;letter-spacing:0.550px;">27</div>
<div class="t" style="left:1426.28px;top:768.12px;font-size:20px;color:#343434;letter-spacing:0.300px;">2251</div>
<div class="t" style="left:1583.25px;top:768.12px;font-size:20px;color:#343434;letter-spacing:0.550px;">30</div>
<div class="t" style="left:1717.62px;top:768.12px;font-size:20px;color:#343434;letter-spacing:0.300px;">1283</div>
<div class="t" style="left:514.55px;top:806.49px;font-size:20px;color:#343434;letter-spacing:-0.208px;">2025 (YTD)</div>
<div class="t" style="left:709.24px;top:806.49px;font-size:20px;color:#343434;letter-spacing:0.550px;">38</div>
<div class="t" style="left:843.60px;top:806.49px;font-size:20px;color:#343434;letter-spacing:0.300px;">1949</div>
<div class="t" style="left:1000.57px;top:806.49px;font-size:20px;color:#343434;letter-spacing:0.550px;">63</div>
<div class="t" style="left:1134.94px;top:806.49px;font-size:20px;color:#343434;letter-spacing:0.795px;">1185</div>
<div class="t" style="left:1291.91px;top:806.49px;font-size:20px;color:#343434;letter-spacing:0.550px;">25</div>
<div class="t" style="left:1431.93px;top:806.49px;font-size:20px;color:#343434;letter-spacing:0.363px;">769</div>
<div class="t" style="left:1583.25px;top:806.49px;font-size:20px;color:#343434;letter-spacing:0.550px;">26</div>
<div class="t" style="left:1723.27px;top:806.49px;font-size:20px;color:#343434;letter-spacing:0.363px;">352</div>
<div class="a" style="left:0;top:0;width:1792.3px;height:960px;overflow:hidden;z-index:2;">
<div class="t" style="left:1682.05px;top:388.69px;font-size:19.5px;color:#555;font-weight:700;letter-spacing:-0.523px;"># Companies</div>
</div>
<!-- chat bubble -->
<div class="a" style="left:1719px;top:767px;width:80px;height:80px;border-radius:50%;background:#292c48;z-index:3;"></div>
<svg style="left:1741px;top:786.5px;z-index:4" width="36" height="41" viewBox="0 0 36 41">
<path d="M5 0.5 H31 C33.6 0.5 35.5 2.4 35.5 5 V40.3 L24.3 35.6 H5 C2.4 35.6 0.5 33.7 0.5 31.1 V5 C0.5 2.4 2.4 0.5 5 0.5 Z" fill="#fff"/>
<path d="M6 25.7 C12 31.4 24 31.4 30 25.7" fill="none" stroke="#292c48" stroke-width="2.4" stroke-linecap="round"/>
</svg>
<!-- page scrollbar -->
<div class="a" style="left:1833px;top:37px;width:14px;height:886px;background:#2c2c2c;z-index:5;"></div>
<svg style="left:1834.9px;top:40.5px;z-index:6" width="9.6" height="6" viewBox="0 0 9 6"><path d="M4.5 0.4 L8.8 5.6 H0.2 Z" fill="#a4a4a4"/></svg>
<div class="a" style="left:1836px;top:616.5px;width:8.2px;height:288.5px;border-radius:4.1px;background:#a2a2a2;z-index:6;"></div>
<svg style="left:1835.5px;top:911px;z-index:6" width="9" height="6" viewBox="0 0 9 6"><path d="M4.5 5.6 L8.8 0.4 H0.2 Z" fill="#a4a4a4"/></svg>

</div></div>
</body></html>
